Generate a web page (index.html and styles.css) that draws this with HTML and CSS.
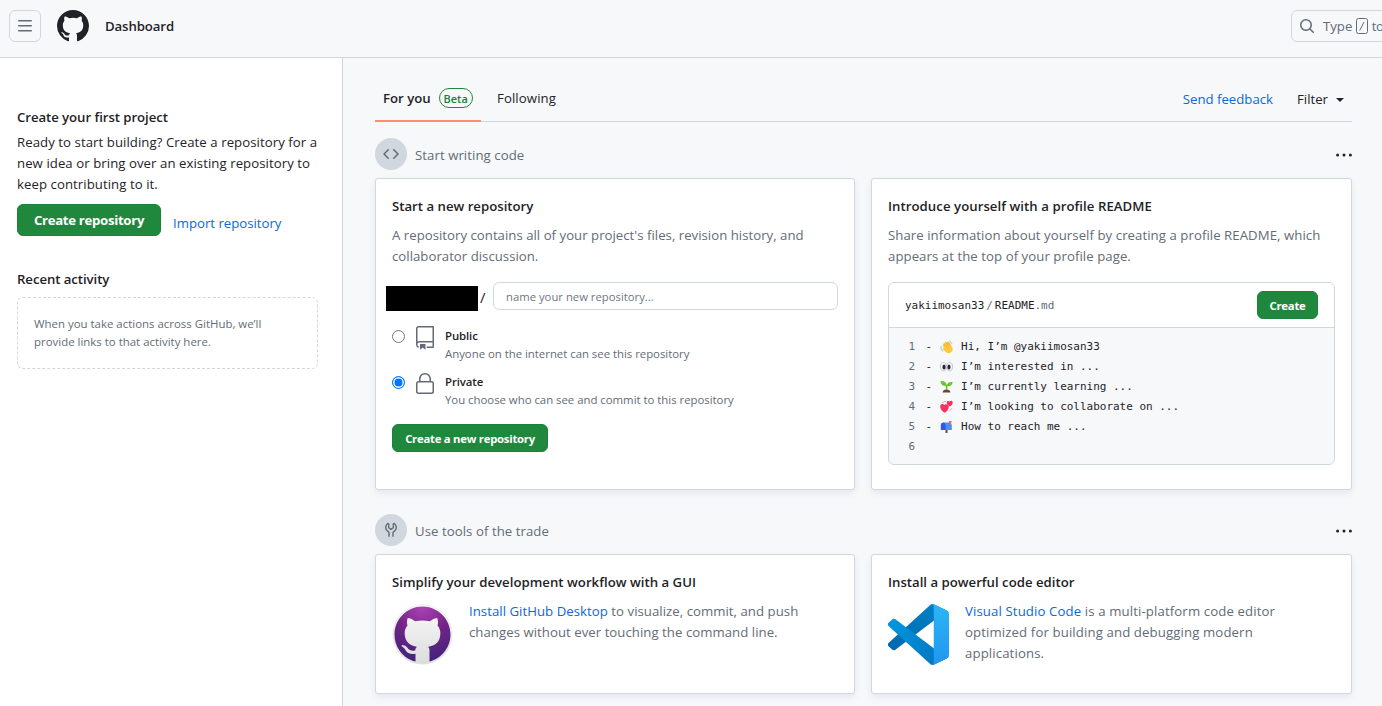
FILE: index.html
```html
<!DOCTYPE html>
<html lang="en">
<head>
<meta charset="utf-8">
<title>Dashboard</title>
<link rel="stylesheet" href="styles.css">
</head>
<body>
<header class="topbar">
  <button class="menu-btn" aria-label="Menu"><svg width="16" height="16" viewBox="0 0 16 16"><path d="M1 2.75A.75.75 0 0 1 1.75 2h12.5a.75.75 0 0 1 0 1.5H1.75A.75.75 0 0 1 1 2.75Zm0 5A.75.75 0 0 1 1.75 7h12.5a.75.75 0 0 1 0 1.5H1.75A.75.75 0 0 1 1 7.75ZM1.75 12h12.5a.75.75 0 0 1 0 1.5H1.75a.75.75 0 0 1 0-1.5Z"/></svg></button>
  <svg class="mark" width="32" height="32" viewBox="0 0 16 16"><path d="M8 0c4.42 0 8 3.58 8 8a8.013 8.013 0 0 1-5.45 7.59c-.4.08-.55-.17-.55-.38 0-.27.01-1.13.01-2.2 0-.75-.25-1.23-.54-1.48 1.78-.2 3.65-.88 3.65-3.95 0-.88-.31-1.59-.82-2.15.08-.2.36-1.02-.08-2.12 0 0-.67-.22-2.2.82-.64-.18-1.32-.27-2-.27-.68 0-1.36.09-2 .27-1.53-1.03-2.2-.82-2.2-.82-.44 1.1-.16 1.92-.08 2.12-.51.56-.82 1.28-.82 2.15 0 3.06 1.86 3.75 3.64 3.95-.23.2-.44.55-.51 1.07-.46.21-1.61.55-2.33-.66-.15-.24-.6-.83-1.23-.82-.67.01-.27.38.01.53.34.19.73.9.82 1.13.16.45.68 1.31 2.69.94 0 .67.01 1.3.01 1.49 0 .21-.15.45-.55.38A7.995 7.995 0 0 1 0 8c0-4.42 3.58-8 8-8Z"/></svg>
  <span class="crumb">Dashboard</span>
  <div class="search">
    <svg width="16" height="16" viewBox="0 0 16 16"><path d="M10.68 11.74a6 6 0 0 1-7.922-8.982 6 6 0 0 1 8.982 7.922l3.04 3.04a.749.749 0 0 1-.326 1.275.749.749 0 0 1-.734-.215ZM11.5 7a4.499 4.499 0 1 0-8.997 0A4.499 4.499 0 0 0 11.5 7Z"/></svg>
    <span class="search-text">Type</span><kbd class="key"><svg width="12" height="16" viewBox="0 0 12 16"><path d="M3.7 12.5 8 4" fill="none" stroke="#636c76"/><rect x=".5" y=".5" width="11" height="15" rx="2" fill="none" stroke="#636c76"/></svg></kbd><span class="search-text">to</span>
  </div>
</header>
<div class="page">
  <aside class="sidebar">
    <h2 class="side-title">Create your first project</h2>
    <p class="side-copy">Ready to start building? Create a repository for a<br>new idea or bring over an existing repository to<br>keep contributing to it.</p>
    <div class="side-actions"><a class="btn btn-side">Create repository</a><a class="link import">Import repository</a></div>
    <h2 class="side-title t-recent">Recent activity</h2>
    <p class="activity">When you take actions across GitHub, we’ll<br>provide links to that activity here.</p>
  </aside>
  <main class="feed">
    <nav class="tabs">
      <a class="tab tab-on"><span>For you</span><span class="beta">Beta</span></a>
      <a class="tab">Following</a>
      <a class="feedback link">Send feedback</a>
      <a class="filter">Filter<i class="caret"></i></a>
    </nav>
    <section class="group">
      <div class="group-head">
        <span class="disc"><svg width="16" height="16" viewBox="0 0 16 16"><path d="m11.28 3.22 4.25 4.25a.75.75 0 0 1 0 1.06l-4.25 4.25a.749.749 0 0 1-1.275-.326.749.749 0 0 1 .215-.734L13.94 8l-3.72-3.72a.749.749 0 0 1 .326-1.275.749.749 0 0 1 .734.215Zm-6.56 0a.751.751 0 0 1 1.042.018.751.751 0 0 1 .018 1.042L2.06 8l3.72 3.72a.749.749 0 0 1-.326 1.275.749.749 0 0 1-.734-.215L.47 8.53a.75.75 0 0 1 0-1.06Z"/></svg></span>
        <span class="group-name">Start writing code</span>
        <svg class="dots" width="16" height="4" viewBox="0 0 16 4"><circle cx="1.6" cy="2" r="1.5"/><circle cx="8" cy="2" r="1.5"/><circle cx="14.4" cy="2" r="1.5"/></svg>
      </div>
      <div class="cards cards-tall">
        <article class="card">
          <h3 class="card-title">Start a new repository</h3>
          <p class="copy cp-repo">A repository contains all of your project's files, revision history, and<br>collaborator discussion.</p>
          <div class="name-row"><span class="owner"></span><span class="slash">/</span><span class="name-input">name your new repository...</span></div>
          <div class="choice">
            <span class="radio"></span>
            <svg width="24" height="24" viewBox="0 0 24 24"><path d="M3 2.75A2.75 2.75 0 0 1 5.75 0h14.5a.75.75 0 0 1 .75.75v20.5a.75.75 0 0 1-.75.75h-6a.75.75 0 0 1 0-1.5h5.25v-4H6A1.5 1.5 0 0 0 4.5 18v.75c0 .716.43 1.334 1.05 1.605a.75.75 0 0 1-.6 1.374A3.251 3.251 0 0 1 3 18.75ZM19.5 1.5H5.75c-.69 0-1.25.56-1.25 1.25v12.651A2.989 2.989 0 0 1 6 15h13.5Z"/><path d="M7 18.25a.25.25 0 0 1 .25-.25h5a.25.25 0 0 1 .25.25v5.01a.25.25 0 0 1-.397.201l-2.206-1.604a.25.25 0 0 0-.294 0L7.397 23.46a.25.25 0 0 1-.397-.2Z"/></svg>
            <div class="choice-text"><b class="choice-name">Public</b><span>Anyone on the internet can see this repository</span></div>
          </div>
          <div class="choice">
            <span class="radio radio-on"></span>
            <svg width="24" height="24" viewBox="0 0 24 24"><path d="M6 9V7.25C6 3.845 8.503 1 12 1s6 2.845 6 6.25V9h.5a2.5 2.5 0 0 1 2.5 2.5v8a2.5 2.5 0 0 1-2.5 2.5h-13A2.5 2.5 0 0 1 3 19.5v-8A2.5 2.5 0 0 1 5.5 9Zm-1.5 2.5v8a1 1 0 0 0 1 1h13a1 1 0 0 0 1-1v-8a1 1 0 0 0-1-1h-13a1 1 0 0 0-1 1Zm3-4.25V9h9V7.25c0-2.67-1.922-4.75-4.5-4.75-2.578 0-4.5 2.08-4.5 4.75Z"/></svg>
            <div class="choice-text"><b class="choice-name">Private</b><span>You choose who can see and commit to this repository</span></div>
          </div>
          <a class="btn btn-new">Create a new repository</a>
        </article>
        <article class="card">
          <h3 class="card-title ct-intro">Introduce yourself with a profile README</h3>
          <p class="copy cp-intro">Share information about yourself by creating a profile README, which<br>appears at the top of your profile page.</p>
          <div class="readme">
            <div class="readme-head"><span class="path">yakiimosan33<i class="sep">/</i>README<i>.md</i></span><a class="btn btn-create">Create</a></div>
            <ol class="code">
              <li><i>1</i><span>-</span><svg width="13" height="13" viewBox="0 0 13 13"><path d="M3 4 6 1.6 7 2l1-.6 1 .4.7 1L12.5 8v3L10 13H7L3 9.5l-.5-1 1-.5L3 6Z" fill="#ffc83d"/><path d="m4 4 3 3M6 3l3 3M8 2.6l2.5 3" stroke="#e09a23" stroke-width=".6"/><path d="M1 6v3l2 2.5M9.5.8l2.5 3" fill="none" stroke="#8bb8d9" stroke-width=".9"/></svg><span>Hi, I’m @yakiimosan33</span></li>
              <li><i>2</i><span>-</span><svg width="13" height="13" viewBox="0 0 13 13"><g fill="#fff" stroke="#b4b4b4" stroke-width=".8"><ellipse cx="3.4" cy="6.7" rx="2.9" ry="4.2"/><ellipse cx="9.6" cy="6.7" rx="2.9" ry="4.2"/></g><ellipse cx="4" cy="6.9" rx="1.6" ry="2.5" fill="#321b41"/><ellipse cx="9" cy="6.9" rx="1.6" ry="2.5" fill="#321b41"/></svg><span>I’m interested in ...</span></li>
              <li><i>3</i><span>-</span><svg width="13" height="13" viewBox="0 0 13 13"><path d="M2.500 12.500q.5-3 4-3t4 3Z" fill="#6d4534"/><path d="M6.600 10V5" stroke="#69b52b" stroke-width="1.500"/><path d="M7 6Q1 6.500.4 1.200 6 .3 7 6Zm-.2 0Q7 1.500 12.700 2 12 7 6.800 6Z" fill="#6ac62f"/></svg><span>I’m currently learning ...</span></li>
              <li><i>4</i><span>-</span><svg width="13" height="13" viewBox="0 0 13 13"><path d="M5 12.800C2 11.500-.2 8.500.3 5.700.8 3.700 3.200 3.400 4.300 5 5.600 3.500 8.400 4.200 8.800 6.300c.3 2.500-2 5.300-3.800 6.500Z" fill="#f92f60"/><path d="M10 6.500Q6.300 4.500 6.800 2.200c.4-1.700 2.200-1.600 2.900-.5.7-1.400 3-1.100 3 .8 0 1.600-1.300 3.100-2.700 4Z" fill="#f92f60"/><path d="M2 3q2-2 4-1.500M9.500 10.500q2-.5 2.500-2.500" fill="none" stroke="#ff8db0" stroke-width=".8"/></svg><span>I’m looking to collaborate on ...</span></li>
              <li><i>5</i><span>-</span><svg width="13" height="13" viewBox="0 0 13 13"><path d="M5.500 9H7.500v4h-2Z" fill="#7d4533"/><path d="M3 2.500h6.500q2.300.5 2.300 3V10H3Z" fill="#4a90f5"/><path d="M.8 10V5q0-2.500 2.300-2.500T5.600 5v5Z" fill="#3156e8"/><path d="M9 6V1h2.500v1.800H9.800V6Z" fill="#f8546b"/></svg><span>How to reach me ...</span></li>
              <li><i>6</i></li>
            </ol>
          </div>
        </article>
      </div>
    </section>
    <section class="group group-tools">
      <div class="group-head">
        <span class="disc"><svg width="16" height="16" viewBox="0 0 16 16"><path d="M6 14.800v-4.300L3.300 7.800Q1.600 4.500 4.700 1.500L5.700 1.800v4L8 7.400l2.300-1.600v-4l1-.3q3.100 3 1.400 6.300L10 10.500v4.300" fill="none" stroke="#636c76" stroke-width="1.400" stroke-linejoin="round"/></svg></span>
        <span class="group-name">Use tools of the trade</span>
        <svg class="dots" width="16" height="4" viewBox="0 0 16 4"><circle cx="1.6" cy="2" r="1.500"/><circle cx="8" cy="2" r="1.500"/><circle cx="14.400" cy="2" r="1.500"/></svg>
      </div>
      <div class="cards cards-short">
        <article class="card">
          <h3 class="card-title ct-gui">Simplify your development workflow with a GUI</h3>
          <div class="media">
            <svg width="61" height="61" viewBox="0 0 61 61"><defs><radialGradient id="pur" cx=".5" cy="0" r="1"><stop offset="0" stop-color="#ac44b5"/><stop offset=".5" stop-color="#752488"/><stop offset="1" stop-color="#41237a"/></radialGradient><linearGradient id="sil" x1="0" y1="0" x2="0" y2="1"><stop offset="0" stop-color="#fafafa"/><stop offset="1" stop-color="#dcdcdc"/></linearGradient></defs><circle cx="30.500" cy="30.500" r="29.700" fill="url(#sil)" stroke="#e3e3e3" stroke-width=".6"/><g transform="translate(2.500 2.500) scale(3.500)"><path fill="url(#pur)" d="M8 0c4.420 0 8 3.580 8 8a8.013 8.013 0 0 1-5.450 7.590l-.55.1V12.400q0-.5-.4-.9c2-.2 3.500-1.200 3.500-3.900 0-.9-.3-1.600-.8-2.200.2-.7.2-1.300-.1-2.100q-.9 0-2.100.9Q9.100 4 8 4t-2.100.2Q4.700 3.300 3.800 3.300c-.3.800-.3 1.400-.1 2.100-.5.600-.8 1.300-.8 2.200 0 2.700 1.700 3.700 3.500 3.900q-.5.400-.5 1.100-1.600.2-2.200-.8-.5-.8-1.500-.8-.5.300.2.600.5.300.8 1 .7 1.200 2.800.9v2.190l-.65-.1A7.995 7.995 0 0 1 0 8c0-4.420 3.580-8 8-8Z"/></g></svg>
            <p class="copy cp-gui"><a class="link">Install GitHub Desktop</a> to visualize, commit, and push<br>changes without ever touching the command line.</p>
          </div>
        </article>
        <article class="card">
          <h3 class="card-title">Install a powerful code editor</h3>
          <div class="media">
            <svg width="61" height="61" viewBox="0 0 100 100"><defs><linearGradient id="vf" x1="0" y1="0" x2="0" y2="1"><stop offset="0" stop-color="#2cb5f5"/><stop offset="1" stop-color="#2196f0"/></linearGradient><linearGradient id="vm" x1="0" y1="0" x2="1" y2="1"><stop offset="0" stop-color="#0098e0"/><stop offset="1" stop-color="#0072bd"/></linearGradient><linearGradient id="vb" x1="1" y1="0" x2="0" y2="1"><stop offset="0" stop-color="#0084c9"/><stop offset="1" stop-color="#0067ae"/></linearGradient></defs><path fill="url(#vb)" d="M96.460 10.796 75.857.876a6.230 6.230 0 0 0-7.107 1.207L1.299 63.583a4.167 4.167 0 0 0 .004 6.162l5.510 5.009a4.167 4.167 0 0 0 5.320.236l81.228-61.620c2.725-2.067 6.639-.124 6.639 3.297v-.24a6.250 6.250 0 0 0-3.540-5.630Z"/><path fill="url(#vm)" d="m96.460 89.204-20.603 9.920a6.229 6.229 0 0 1-7.107-1.207l-67.451-61.500a4.167 4.167 0 0 1 .004-6.162l5.510-5.009a4.167 4.167 0 0 1 5.320-.236l81.228 61.620c2.725 2.067 6.639.123 6.639-3.297v.24a6.250 6.250 0 0 1-3.540 5.630Z"/><path fill="url(#vf)" d="M75.858 99.126a6.232 6.232 0 0 1-7.108-1.210c2.306 2.307 6.250.674 6.250-2.588V4.672c0-3.262-3.944-4.895-6.250-2.589a6.232 6.232 0 0 1 7.108-1.210l20.600 9.908A6.250 6.250 0 0 1 100 16.413v67.174a6.250 6.250 0 0 1-3.541 5.633l-20.601 9.906Z"/></svg>
            <p class="copy cp-code"><a class="link">Visual Studio Code</a> is a multi-platform code editor<br>optimized for building and debugging modern<br>applications.</p>
          </div>
        </article>
      </div>
    </section>
  </main>
</div>
</body>
</html>
```
FILE: styles.css
```css
* { box-sizing: border-box; }
body { margin: 0; height: 706px; overflow: hidden; background: #f6f8fa; color: #1f2328; font: 13.2px/21px "Open Sans", "Noto Sans", sans-serif; white-space: nowrap; }
h2, h3, p, ol { margin: 0; }
i { font-style: normal; }
svg { flex: none; fill: #636c76; }

.topbar { display: flex; align-items: center; height: 58px; padding: 0 0 6px 9px; border-bottom: 1px solid #d0d7de; overflow: hidden; }
.menu-btn { display: grid; place-items: center; width: 32px; height: 32px; padding: 0; border: 1px solid #d0d7de; border-radius: 6px; background: #f6f8fa; }
.mark { margin-left: 16px; fill: #1f2328; }
.crumb { margin-left: 16px; padding-top: 2px; font-weight: 600; letter-spacing: -.1px; }
.search { display: flex; flex: none; align-items: center; width: 300px; height: 32px; margin-left: auto; margin-right: -209px; padding-left: 7px; border: 1px solid #d0d7de; border-radius: 6px; color: #636c76; }
.search-text { padding-top: 1px; }
.search-text:first-of-type { margin-left: 8px; }
.key { display: flex; margin: 0 4px; }
.key + .search-text { margin-left: -.5px; letter-spacing: -.5px; }

.page { display: flex; height: 648px; }
.sidebar { flex: none; width: 343px; padding: 49px 24px 0 17px; border-right: 1px solid #d0d7de; background: #fff; }
.side-title { font-size: 13.2px; font-weight: 600; line-height: 21px; letter-spacing: -.06px; }
.side-copy { margin-top: 4px; letter-spacing: .06px; }
.side-actions { display: flex; gap: 12px; height: 32px; margin-top: 9px; }
.btn { display: flex; align-items: center; justify-content: center; border: 1px solid #1c8139; border-radius: 6px; background: #1f883d; color: #fff; font-weight: 700; }
.btn-side { width: 144px; height: 32px; letter-spacing: -.3px; }
.link { color: #0969da; }
.import { padding-top: 9px; }
.t-recent { margin-top: 33px; }
.activity { width: 301px; height: 72px; margin-top: 7px; padding: 17px 16px; border: 1px dashed #d0d7de; border-radius: 6px; color: #636c76; font-size: 11.4px; line-height: 18px; letter-spacing: .02px; }

.feed { flex: 1; padding: 18px 30px 0 32px; }
.tabs { display: flex; height: 46px; border-bottom: 1px solid #d0d7de; }
.tab { display: flex; align-items: center; height: 46px; padding: 0 8px 1px; letter-spacing: .1px; }
.tab-on { width: 106px; margin-right: 8px; padding-bottom: 0; border-bottom: 2px solid #fd8c73; font-weight: 600; letter-spacing: 0; }
.beta { width: 34px; height: 20px; margin-left: 8px; border: 1px solid #1f883d; border-radius: 10px; color: #1a7f37; font-size: 11px; line-height: 19px; text-align: center; }
.feedback { margin-left: auto; padding-top: 13px; }
.filter { display: flex; width: 55px; margin-left: 24px; padding-top: 13px; }
.caret { width: 8px; height: 4px; margin: 9px 0 0 8px; border: 4px solid transparent; border-top-color: #1f2328; border-bottom: 0; }

.group { padding-top: 16px; }
.group-tools { padding-top: 24px; }
.group-head { display: flex; align-items: center; height: 32px; }
.disc { display: grid; place-items: center; width: 32px; height: 32px; border-radius: 50%; background: #d0d7de; }
.group-name { padding: 2px 0 0 8px; color: #636c76; letter-spacing: .06px; }
.dots { margin: 2px 0 0 auto; fill: #1f2328; }
.cards { display: grid; grid-template-columns: 480px 481px; gap: 16px; margin-top: 8px; }
.cards-tall { height: 312px; }
.cards-short { height: 140px; }
.card { padding: 17px 16px 16px; border: 1px solid #d0d7de; border-radius: 3px; background: #fff; box-shadow: 0 3px 6px rgba(140,149,159,.15); }
.card-title { font-size: 13.2px; font-weight: 600; line-height: 21px; }
.ct-intro { letter-spacing: .05px; }
.ct-gui { letter-spacing: .02px; }
.copy { margin-top: 8px; color: #636c76; }
.cp-repo { letter-spacing: .02px; }
.cp-intro { letter-spacing: .06px; }
.cp-gui { letter-spacing: .04px; }
.cp-code { letter-spacing: .12px; }

.name-row { display: flex; margin: 15px 0 0 -6px; }
.owner { width: 92px; height: 25px; margin-top: 4px; background: #000; }
.slash { width: 15px; padding: 5px 0 0 2px; font-size: 15px; }
.name-input { width: 345px; height: 28px; padding-left: 12px; border: 1px solid #d0d7de; border-radius: 6px; color: #6e7781; font-size: 11.3px; line-height: 27px; }
.choice { display: flex; height: 46px; }
.name-row + .choice { margin-top: 15px; }
.radio { width: 13px; height: 13px; margin: 4px 8px 0 0; border: 1px solid #767676; border-radius: 50%; }
.radio-on { border-color: #0075ff; background: #0075ff; box-shadow: inset 0 0 0 1.5px #fff; }
.choice-text { display: grid; grid-template-rows: 18px 18px; margin-left: 8px; padding-top: 1px; color: #636c76; font-size: 11.4px; line-height: 18px; letter-spacing: -.02px; }
.choice-name { color: #1f2328; font-weight: 600; letter-spacing: -.1px; }
.btn-new { width: 156px; height: 28px; margin-top: 6px; font-size: 11.3px; letter-spacing: -.24px; }

.readme { width: 447px; height: 183px; margin-top: 15px; overflow: hidden; border: 1px solid #d0d7de; border-radius: 6px; background: #f6f8fa; font-family: "DejaVu Sans Mono", "Liberation Mono", monospace; font-size: 10.98px; }
.readme-head { display: flex; align-items: center; justify-content: space-between; height: 45px; padding: 0 16px; border-bottom: 1px solid #d0d7de; background: #fff; }
.path i { color: #636c76; }
.path .sep { margin: 0 2px; }
.btn-create { width: 61px; height: 28px; font: 700 11.3px "Open Sans", sans-serif; letter-spacing: -.2px; }
.code { padding: 8px 0 0 19.5px; list-style: none; }
.code li { display: flex; align-items: center; height: 20px; }
.code i { width: 17px; color: #636c76; }
.code svg { margin: 0 8.5px 0 7.5px; }

.media { display: flex; margin-top: 9px; }
.media .copy { margin: -1px 0 0 16px; }
.media svg { margin-top: 2px; }
```
